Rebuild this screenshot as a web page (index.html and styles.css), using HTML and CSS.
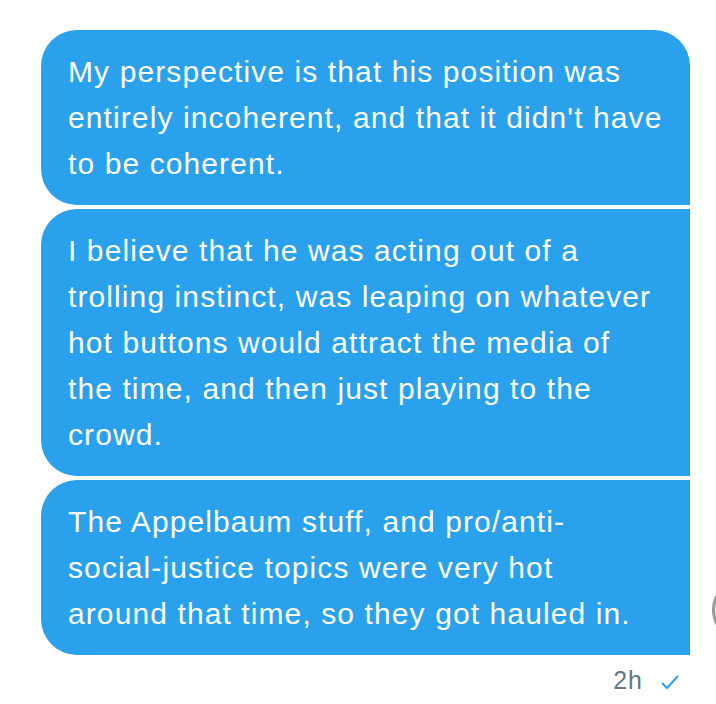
FILE: index.html
```html
<!DOCTYPE html>
<html>
<head>
<meta charset="utf-8">
<link rel="stylesheet" href="styles.css">
</head>
<body>
<div class="thread">
  <div class="messages">
    <div class="bubble first">My perspective is that his position was<br>entirely incoherent, and that it didn't have<br>to be coherent.</div>
    <div class="bubble middle">I believe that he was acting out of a<br>trolling instinct, was leaping on whatever<br>hot buttons would attract the media of<br>the time, and then just playing to the<br>crowd.</div>
    <div class="bubble last">The Appelbaum stuff, and pro/anti-<br>social-justice topics were very hot<br>around that time, so they got hauled in.</div>
    <div class="meta"><span class="time">2h</span><svg class="check" width="20" height="16" viewBox="0 0 20 16"><path d="M2 9 L7 14 L18 2" fill="none" stroke="#2aa1ec" stroke-width="2"/></svg></div>
  </div>
  <div class="avatar-slot"><div class="avatar"></div></div>
</div>
</body>
</html>
```
FILE: styles.css
```css
html, body {
  margin: 0;
  padding: 0;
  background: #ffffff;
}
body {
  width: 716px;
  height: 704px;
  overflow: hidden;
  font-family: "Liberation Sans", Arial, sans-serif;
}
.thread {
  display: flex;
  align-items: flex-end;
  padding: 30px 0 0 41px;
  gap: 22px;
}
.messages {
  width: 649px;
  flex-shrink: 0;
  display: flex;
  flex-direction: column;
  gap: 4px;
}
.bubble {
  background: #2aa1ec;
  color: #ffffff;
  font-size: 30px;
  letter-spacing: 1.1px;
  line-height: 46px;
  padding: 19px 20px 18px 27px;
  white-space: nowrap;
}
.first {
  border-radius: 36px 36px 0 36px;
}
.middle, .last {
  border-radius: 36px 0 0 36px;
}
.meta {
  display: flex;
  justify-content: flex-end;
  align-items: center;
  gap: 17px;
  padding: 3px 10px 0 0;
  height: 37px;
}
.time {
  color: #657786;
  font-size: 25px;
  letter-spacing: 1px;
}
.check {
  margin-top: 2px;
}
.avatar-slot {
  width: 4px;
  height: 62px;
  overflow: hidden;
  flex-shrink: 0;
  margin-bottom: 58px;
}
.avatar {
  width: 56px;
  height: 56px;
  border-radius: 50%;
  background: #f0f0f0;
  border: 3px solid #9a9a9a;
}
```
